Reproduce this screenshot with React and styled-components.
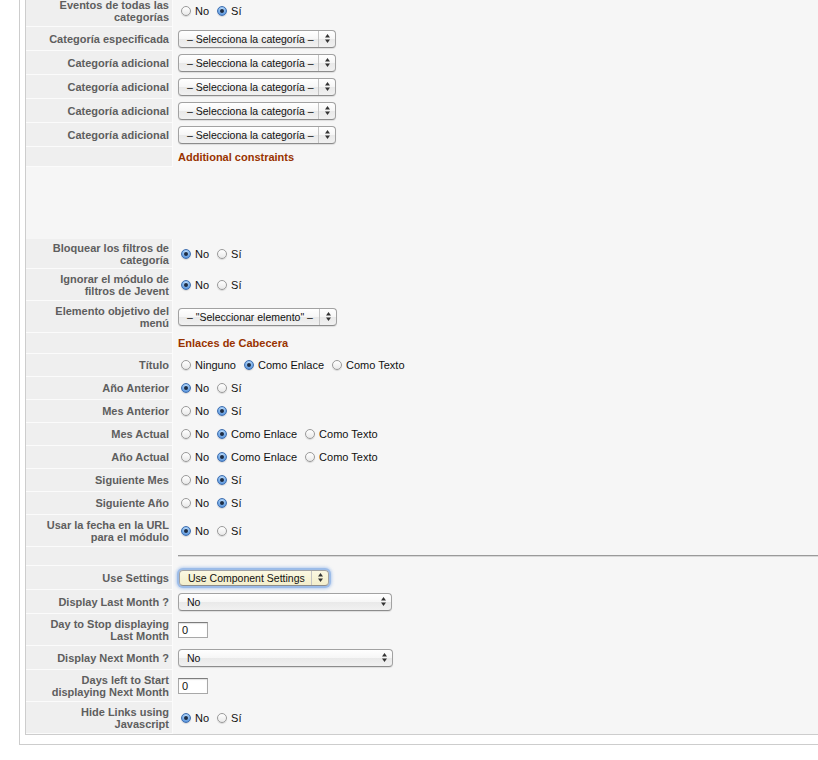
import styled, { createGlobalStyle } from "styled-components";

const GlobalStyle = createGlobalStyle`
	html, body {
		margin: 0;
		background: #fff;
		overflow: hidden;
	}
	body {
		font-family: "Liberation Sans", Arial, sans-serif;
		font-size: 11px;
		color: #111;
	}
`;

const Frame = styled.div`
	margin: -5px 0 0 19px;
	border-left: 1px solid #cdcdcd;
	border-bottom: 1px solid #cdcdcd;
	padding: 0 0 9px 5px;
`;

const Panel = styled.div`
	background: #f6f6f6;
	border: 1px solid #cdcdcd;
	border-top: none;
	border-right: none;
`;

const Row = styled.div`
	display: grid;
	grid-template-columns: 147px 1fr;
	height: ${(p) => p.$h}px;
`;

const Label = styled.div`
	box-sizing: border-box;
	display: flex;
	align-items: center;
	justify-content: flex-end;
	text-align: right;
	padding: 0 3px 0 6px;
	background: #efefef;
	border-bottom: 1px solid #fbfbfb;
	border-right: 1px solid #fbfbfb;
	font-weight: bold;
	color: #5e5e5e;
	line-height: 12px;
`;

const Value = styled.div`
	display: flex;
	align-items: center;
	padding-left: 5px;
	padding-bottom: 1px;
	min-width: 0;
`;

const Spacer = styled.div`
	height: 72px;
`;

const Heading = styled.span`
	font-weight: bold;
	color: #993300;
`;

const Rule = styled.div`
	flex: 1;
	height: 0;
	border-top: 1px solid #9a9a9a;
	border-bottom: 1px solid #d8d8d8;
`;

const Choice = styled.span`
	display: inline-flex;
	align-items: center;
`;

const Radio = styled.span`
	box-sizing: border-box;
	width: 10px;
	height: 10px;
	border-radius: 50%;
	margin: 0 4px 0 3px;
	flex: none;
	display: inline-flex;
	align-items: center;
	justify-content: center;
	border: 1px solid ${(p) => (p.$on ? "#3f6fb0" : "#9a9a9a")};
	background: ${(p) =>
		p.$on
			? "radial-gradient(circle at 50% 30%, #c4e2ff 0%, #76abe6 55%, #4580cf 100%)"
			: "linear-gradient(#ffffff, #e9e9e9)"};
	box-shadow: 0 1px 1px rgba(0, 0, 0, 0.12);

	&::after {
		content: "";
		display: ${(p) => (p.$on ? "block" : "none")};
		width: 4px;
		height: 4px;
		border-radius: 50%;
		background: #1d2c44;
	}
`;

const OptionText = styled.span`
	margin-right: 5px;
	white-space: nowrap;
`;

const Select = styled.div`
	box-sizing: border-box;
	width: ${(p) => p.$w}px;
	height: ${(p) => (p.$focus ? 16 : 18)}px;
	margin-left: ${(p) => (p.$focus ? 1 : 0)}px;
	border: 1px solid #a2a2a2;
	border-bottom-color: #8c8c8c;
	border-radius: 4px;
	display: flex;
	align-items: center;
	font-size: 10.5px;
	color: #111;
	background: ${(p) =>
		p.$focus
			? "linear-gradient(#fbf8e2, #f3eecb)"
			: "linear-gradient(#ffffff 0%, #f6f6f6 50%, #e9e9e9 51%, #f1f1f1 100%)"};
	box-shadow: ${(p) =>
		p.$focus
			? "0 0 0 2px #9cbce8, 0 0 3px 3px rgba(110, 160, 230, 0.45)"
			: "0 1px 1px rgba(0, 0, 0, 0.1)"};
`;

const SelectText = styled.span`
	flex: 1;
	padding-left: 8px;
	white-space: nowrap;
	overflow: hidden;
`;

const ArrowBox = styled.span`
	width: 16px;
	height: 100%;
	display: flex;
	align-items: center;
	justify-content: center;
	border-left: 1px solid ${(p) => (p.$divider ? "#c4c4c4" : "transparent")};
`;

const TextInput = styled.div`
	box-sizing: border-box;
	width: 30px;
	height: 16px;
	border: 1px solid #a8a8a8;
	border-top-color: #7d7d7d;
	background: #fff;
	box-shadow: inset 0 1px 1px rgba(0, 0, 0, 0.12);
	padding: 0 3px;
	line-height: 14px;
	font-size: 11px;
`;

function Arrows() {
	return (
		<svg width="5" height="9" viewBox="0 0 5 9">
			<polygon points="2.5,0 5,3.5 0,3.5" fill="#333" />
			<polygon points="0,5.5 5,5.5 2.5,9" fill="#333" />
		</svg>
	);
}

function Dropdown({ text, width, divider = true, focus = false }) {
	return (
		<Select $w={width} $focus={focus}>
			<SelectText>{text}</SelectText>
			<ArrowBox $divider={divider}>
				<Arrows />
			</ArrowBox>
		</Select>
	);
}

function Radios({ options, checked }) {
	return (
		<>
			{options.map((o, i) => (
				<Choice key={o}>
					<Radio $on={i === checked} />
					<OptionText>{o}</OptionText>
				</Choice>
			))}
		</>
	);
}

const yesNo = ["No", "Sí"];
const links = ["No", "Como Enlace", "Como Texto"];

function Field({ label, h = 23, children }) {
	return (
		<Row $h={h}>
			<Label>{label}</Label>
			<Value>{children}</Value>
		</Row>
	);
}

const CAT = "– Selecciona la categoría –";

export default function App() {
	return (
		<>
			<GlobalStyle />
			<Frame>
				<Panel>
					<Field label={<>Eventos de todas las<br />categorías</>} h={32}>
						<Radios options={yesNo} checked={1} />
					</Field>
					<Field label="Categoría especificada" h={24}>
						<Dropdown text={CAT} width={158} />
					</Field>
					{[0, 1, 2, 3].map((i) => (
						<Field key={i} label="Categoría adicional" h={24}>
							<Dropdown text={CAT} width={158} />
						</Field>
					))}
					<Field label="" h={20}>
						<Heading>Additional constraints</Heading>
					</Field>
					<Spacer />
					<Field label={<>Bloquear los filtros de<br />categoría</>} h={30}>
						<Radios options={yesNo} checked={0} />
					</Field>
					<Field label={<>Ignorar el módulo de<br />filtros de Jevent</>} h={32}>
						<Radios options={yesNo} checked={0} />
					</Field>
					<Field label={<>Elemento objetivo del<br />menú</>} h={32}>
						<Dropdown text={'– "Seleccionar elemento" –'} width={159} />
					</Field>
					<Field label="" h={21}>
						<Heading>Enlaces de Cabecera</Heading>
					</Field>
					<Field label="Título">
						<Radios options={["Ninguno", "Como Enlace", "Como Texto"]} checked={1} />
					</Field>
					<Field label="Año Anterior">
						<Radios options={yesNo} checked={0} />
					</Field>
					<Field label="Mes Anterior">
						<Radios options={yesNo} checked={1} />
					</Field>
					<Field label="Mes Actual">
						<Radios options={links} checked={1} />
					</Field>
					<Field label="Año Actual">
						<Radios options={links} checked={1} />
					</Field>
					<Field label="Siguiente Mes">
						<Radios options={yesNo} checked={1} />
					</Field>
					<Field label="Siguiente Año">
						<Radios options={yesNo} checked={1} />
					</Field>
					<Field label={<>Usar la fecha en la URL<br />para el módulo</>} h={32}>
						<Radios options={yesNo} checked={0} />
					</Field>
					<Field label="" h={19}>
						<Rule />
					</Field>
					<Field label="Use Settings" h={24}>
						<Dropdown text="Use Component Settings" width={150} focus />
					</Field>
					<Field label="Display Last Month ?" h={24}>
						<Dropdown text="No" width={214} divider={false} />
					</Field>
					<Field label={<>Day to Stop displaying<br />Last Month</>} h={32}>
						<TextInput>0</TextInput>
					</Field>
					<Field label="Display Next Month ?" h={24}>
						<Dropdown text="No" width={215} divider={false} />
					</Field>
					<Field label={<>Days left to Start<br />displaying Next Month</>} h={32}>
						<TextInput>0</TextInput>
					</Field>
					<Field label={<>Hide Links using<br />Javascript</>} h={32}>
						<Radios options={yesNo} checked={0} />
					</Field>
				</Panel>
			</Frame>
		</>
	);
}
